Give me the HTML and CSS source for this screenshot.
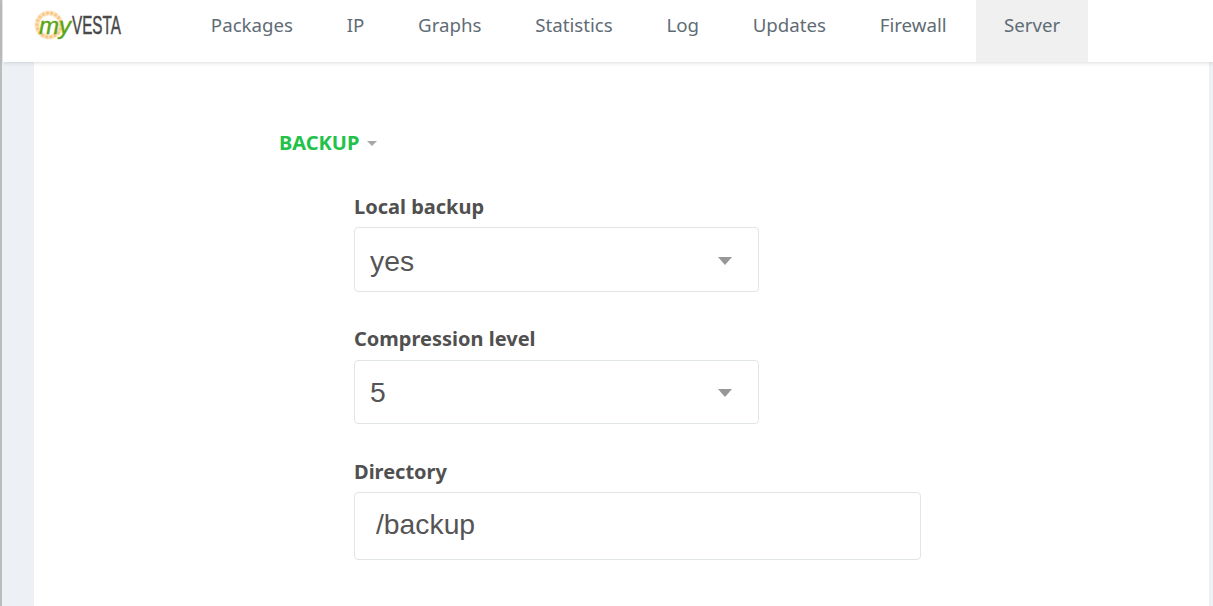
FILE: index.html
```html
<!DOCTYPE html>
<html lang="en">
<head>
<meta charset="utf-8">
<title>myVESTA Server</title>
<link rel="stylesheet" href="styles.css">
</head>
<body>
<div class="frame">
  <header class="topbar">
    <a class="logo" href="#" aria-label="myVESTA">
      <svg width="90" height="36" viewBox="0 0 90 36">
        <circle cx="16" cy="17" r="12" class="ring-base"/>
        <circle cx="16" cy="17" r="12" class="ring-dots"/>
        <text transform="translate(6 26) scale(1 1)" class="logo-my">my</text>
        <text transform="translate(39 26) scale(.575 1)" class="logo-vesta">VESTA</text>
      </svg>
    </a>
    <nav class="menu">
      <a class="menu-item" href="#">Packages</a>
      <a class="menu-item" href="#">IP</a>
      <a class="menu-item" href="#">Graphs</a>
      <a class="menu-item" href="#">Statistics</a>
      <a class="menu-item" href="#">Log</a>
      <a class="menu-item" href="#">Updates</a>
      <a class="menu-item" href="#">Firewall</a>
      <a class="menu-item is-active" href="#">Server</a>
    </nav>
  </header>
  <main class="content">
    <h2 class="section-title">BACKUP<span class="caret"></span></h2>
    <form class="fields">
      <div class="field">
        <label class="field-label" for="local">Local backup</label>
        <div class="select-wrap select-a">
          <select id="local" class="control"><option>yes</option><option>no</option></select>
        </div>
      </div>
      <div class="field field-b">
        <label class="field-label" for="level">Compression level</label>
        <div class="select-wrap select-b">
          <select id="level" class="control"><option>5</option></select>
        </div>
      </div>
      <div class="field field-c">
        <label class="field-label" for="dir">Directory</label>
        <input id="dir" class="control text-control" type="text" value="/backup">
      </div>
    </form>
  </main>
</div>
</body>
</html>
```
FILE: styles.css
```css
* { box-sizing: border-box; }
html, body { margin: 0; height: 100%; overflow: hidden; }
body {
  background: #fff;
  font-family: "Noto Sans", "Open Sans", sans-serif;
  color: #555;
}
.frame {
  height: 606px;
  display: flex;
  flex-direction: column;
  border-left: 2px solid #bdbdbd;
  background: #edf1f5;
}
.topbar {
  height: 62px;
  margin-left: 1px;
  background: #fff;
  display: flex;
  box-shadow: 0 1px 4px rgba(0, 0, 0, .14);
  position: relative;
  flex: none;
}
.logo { width: 90px; margin-left: 30px; padding-top: 8px; display: block; flex: none; }
.ring-base { fill: none; stroke: #fde6c6; stroke-width: 5; }
.ring-dots { fill: none; stroke: #f8c88a; stroke-width: 3.4; stroke-linecap: round; stroke-dasharray: 0 4.2; }
.logo-my { font: italic 400 24px "Liberation Sans", sans-serif; fill: #5aa512; stroke: #5aa512; stroke-width: .4; }
.logo-vesta { font: 400 26.5px "Liberation Sans", sans-serif; fill: #484848; stroke: #484848; stroke-width: .5; }
.menu { display: flex; margin-left: 61px; }
.menu-item {
  display: flex;
  align-items: center;
  padding: 0 26.85px 14px;
  color: #5f6c75;
  font-size: 18.7px;
  text-decoration: none;
}
.menu-item.is-active { background: #f0f0f0; padding: 0 27.5px 14px; margin-left: 3px; }
.content {
  flex: 1;
  margin: 0 4px 0 32px;
  background: #fff;
  padding: 67px 0 0 245px;
}
.section-title {
  margin: 0;
  height: 28px;
  line-height: 28px;
  font-size: 20px;
  font-weight: 700;
  color: #22c24a;
  display: flex;
  align-items: center;
}
.caret {
  width: 0;
  height: 0;
  margin-left: 8px;
  border-left: 5px solid transparent;
  border-right: 5px solid transparent;
  border-top: 5px solid #a8a8a8;
}
.fields { padding: 36px 0 0 75px; }
.field { display: flex; flex-direction: column; align-items: flex-start; }
.field-b { margin-top: 33px; }
.field-b .field-label { margin-bottom: 7px; }
.field-c { margin-top: 34px; }
.field-label {
  height: 28px;
  line-height: 28px;
  font-size: 20px;
  font-weight: 700;
  color: #505050;
  margin-bottom: 6px;
}
.select-wrap { position: relative; width: 405px; }
.select-a .control { height: 65px; padding-top: 3px; }
.select-b .control { height: 64px; }
.select-wrap::after {
  content: "";
  position: absolute;
  right: 27px;
  top: 50%;
  margin-top: -3px;
  border-left: 7.5px solid transparent;
  border-right: 7.5px solid transparent;
  border-top: 8px solid #979797;
  pointer-events: none;
}
.control {
  display: block;
  width: 100%;
  appearance: none;
  -webkit-appearance: none;
  background: #fff;
  border: 1px solid #e0e5e7;
  border-radius: 4px;
  padding: 0 15px;
  font-family: "Liberation Sans", Arial, sans-serif;
  font-size: 28.3px;
  color: #555;
  outline: none;
}
.text-control { width: 567px; height: 68px; padding: 0 21px 4px; }
```
